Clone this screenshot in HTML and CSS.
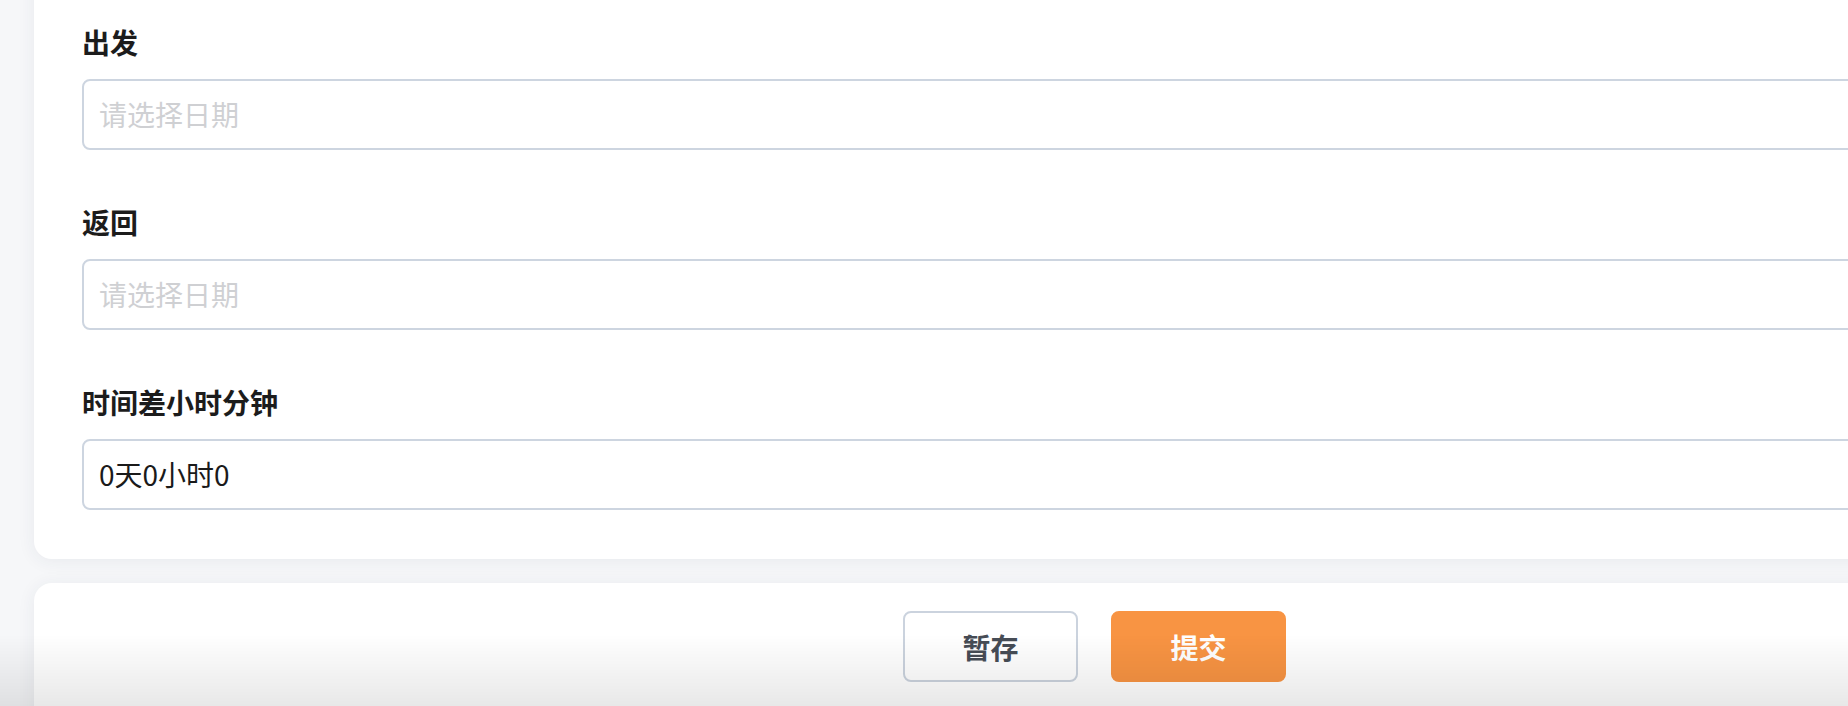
FILE: index.html
```html
<!DOCTYPE html>
<html lang="zh-CN">
<head>
<meta charset="utf-8">
<title>表单</title>
<link rel="stylesheet" href="styles.css">
</head>
<body>
<div class="page">
  <div class="card form-card">
    <div class="field">
      <div class="label">出发</div>
      <div class="input placeholder">请选择日期</div>
    </div>
    <div class="field">
      <div class="label">返回</div>
      <div class="input placeholder">请选择日期</div>
    </div>
    <div class="field">
      <div class="label">时间差小时分钟</div>
      <div class="input">0天0小时0</div>
    </div>
  </div>
  <div class="card action-card">
    <button class="btn btn-plain">暂存</button>
    <button class="btn btn-primary">提交</button>
  </div>
</div>
<div class="bottom-fade"></div>
</body>
</html>
```

FILE: styles.css
```css
html, body {
  margin: 0;
  padding: 0;
}
body {
  background: #f6f7f9;
  overflow: hidden;
  font-family: "Noto Sans CJK SC", "Noto Sans", sans-serif;
  color: #1a1a1a;
  height: 706px;
}
.page {
  margin-top: -40px;
  padding-left: 34px;
  width: 2121px;
}
.card {
  background: #ffffff;
  border-radius: 18px;
  box-shadow: 0 2px 18px rgba(40, 50, 90, 0.07);
}
.form-card {
  padding: 61px 48px 49px;
}
.field {
  margin-bottom: 51px;
}
.field:last-child {
  margin-bottom: 0;
}
.label {
  font-size: 28px;
  font-weight: 700;
  line-height: 42px;
  height: 42px;
  margin-bottom: 16px;
  color: #1c1c1c;
}
.input {
  box-sizing: border-box;
  height: 71px;
  border: 2px solid #cdd5e0;
  border-radius: 8px;
  padding: 0 15px;
  font-size: 28px;
  line-height: 67px;
  color: #1a1a1a;
  background: #fff;
}
.input.placeholder {
  color: #cfd0d3;
}
.action-card {
  margin-top: 24px;
  padding: 28px 0 60px;
  display: flex;
  justify-content: center;
  gap: 33px;
}
.btn {
  box-sizing: border-box;
  width: 175px;
  height: 71px;
  border-radius: 8px;
  font-family: "Noto Sans CJK SC", "Noto Sans", sans-serif;
  font-size: 28px;
  font-weight: 700;
  cursor: pointer;
}
.btn-plain {
  background: #ffffff;
  border: 2px solid #cbd3de;
  color: #474d56;
}
.btn-primary {
  background: #f89443;
  border: 2px solid #f89443;
  color: #ffffff;
}
.bottom-fade {
  position: fixed;
  left: 0;
  right: 0;
  bottom: 0;
  height: 72px;
  background: linear-gradient(to bottom, rgba(0, 0, 0, 0), rgba(0, 0, 0, 0.09));
  pointer-events: none;
}
```
